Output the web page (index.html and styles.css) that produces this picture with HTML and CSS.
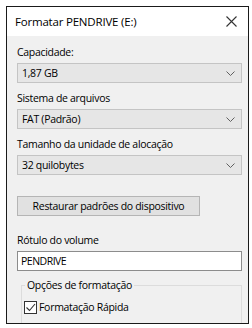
FILE: index.html
```html
<!DOCTYPE html>
<html>
<head>
<meta charset="utf-8">
<link rel="stylesheet" href="styles.css">
</head>
<body>
<div class="window">
  <div class="titlebar">
    <span class="title">Formatar PENDRIVE (E:)</span>
    <svg class="close" width="11" height="11" viewBox="0 0 11 11"><path d="M0.5 0.5 L10.5 10.5 M10.5 0.5 L0.5 10.5" stroke="#333" stroke-width="1.1" fill="none"/></svg>
  </div>
  <div class="content">
    <div class="label">Capacidade:</div>
    <div class="combo"><span>1,87 GB</span><svg class="chev" width="9" height="5" viewBox="0 0 9 5"><path d="M0.5 0.5 L4.5 4.5 L8.5 0.5" stroke="#606060" fill="none"/></svg></div>
    <div class="label gap">Sistema de arquivos</div>
    <div class="combo"><span>FAT (Padrão)</span><svg class="chev" width="9" height="5" viewBox="0 0 9 5"><path d="M0.5 0.5 L4.5 4.5 L8.5 0.5" stroke="#606060" fill="none"/></svg></div>
    <div class="label gap">Tamanho da unidade de alocação</div>
    <div class="combo"><span>32 quilobytes</span><svg class="chev" width="9" height="5" viewBox="0 0 9 5"><path d="M0.5 0.5 L4.5 4.5 L8.5 0.5" stroke="#606060" fill="none"/></svg></div>
    <div class="button">Restaurar padrões do dispositivo</div>
    <div class="label vol">Rótulo do volume</div>
    <div class="input">PENDRIVE</div>
    <fieldset class="group">
      <legend>Opções de formatação</legend>
      <label class="check"><span class="box"><svg width="11" height="11" viewBox="0 0 11 11"><path d="M1.5 5.5 L4.5 8.5 L10 2" stroke="#333" stroke-width="1.1" fill="none"/></svg></span>Formatação Rápida</label>
    </fieldset>
  </div>
</div>
</body>
</html>
```
FILE: styles.css
```css
html, body {
  margin: 0;
  padding: 0;
  background: #ffffff;
}
body {
  font-family: "Open Sans", "Noto Sans", sans-serif;
  font-size: 10.5px;
  letter-spacing: -0.3px;
  color: #000;
}
.window {
  margin: 6px 0 0 6px;
  width: 241px;
  height: 316px;
  border: 1px solid #1a1a1a;
  background: #f0f0f0;
  overflow: hidden;
  box-sizing: content-box;
}
.titlebar {
  height: 29px;
  background: #ffffff;
  display: flex;
  align-items: center;
  justify-content: space-between;
  padding: 0 11px 0 8px;
}
.title {
  font-size: 11.5px;
  letter-spacing: -0.2px;
  color: #000;
}
.close {
  display: block;
}
.content {
  padding: 9px 6px 0 10px;
  display: flex;
  flex-direction: column;
}
.label {
  height: 15px;
  line-height: 15px;
  margin-bottom: 3px;
}
.label.gap {
  margin-top: 8px;
}
.label.vol {
  margin-top: 17px;
}
.combo {
  height: 18px;
  border: 1px solid #c4c4c4;
  background: #e6e6e6;
  display: flex;
  align-items: center;
  justify-content: space-between;
  padding: 0 6px 0 4px;
}
.chev {
  display: block;
}
.button {
  margin-top: 21px;
  width: 181px;
  height: 18px;
  border: 1px solid #b5b5b5;
  background: #e1e1e1;
  display: flex;
  align-items: center;
  justify-content: center;
}
.input {
  height: 18px;
  border: 1px solid #8c8c8c;
  background: #ffffff;
  display: flex;
  align-items: center;
  padding: 0 3px;
  letter-spacing: -0.5px;
}
.group {
  margin: 7px 0 0 4px;
  padding: 4px 6px 10px 2px;
  border: 1px solid #dcdcdc;
  min-width: 0;
}
.group legend {
  padding: 0 2px;
  margin-left: 1px;
}
.check {
  display: flex;
  align-items: center;
  margin-top: 4px;
}
.box {
  width: 11px;
  height: 11px;
  border: 1px solid #333;
  background: #fff;
  margin-right: 2px;
  display: flex;
}
.box svg {
  display: block;
}
```
